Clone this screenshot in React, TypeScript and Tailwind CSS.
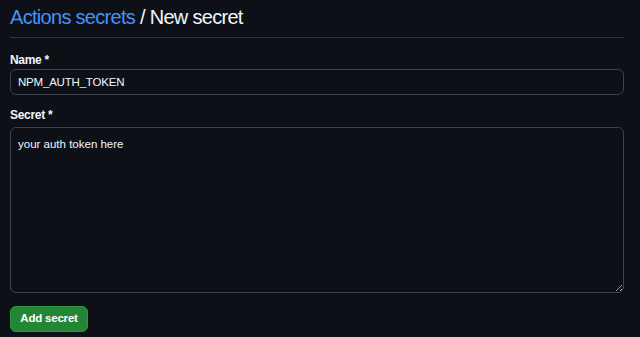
export default function App() {
  return (
    <div
      className="w-[640px] h-[337px] bg-[#0d1117] text-[#f0f6fc] px-[10px] pt-[5px] overflow-hidden"
      style={{ fontFamily: '"Liberation Sans", Arial, sans-serif' }}
    >
      <h1 className="text-[20px] leading-[24px] font-normal tracking-[-0.7px] pb-[8px] border-b border-[#30363d] w-[614px]">
        <a className="text-[#4493f8]">Actions secrets</a> / New secret
      </h1>

      <form className="w-[614px]">
        <label className="block text-[12px] font-bold leading-[16px] tracking-[-0.3px] mt-[14px] mb-[1px]">Name *</label>
        <input
          className="block w-full h-[26px] rounded-[6px] border border-[#3d444d] bg-[#0d1117] px-[7px] text-[11.5px] tracking-[-0.2px] text-[#f0f6fc] outline-none"
          defaultValue="NPM_AUTH_TOKEN"
          style={{ fontFamily: 'inherit' }}
        />

        <label className="block text-[12px] font-bold leading-[16px] tracking-[-0.3px] mt-[12px] mb-[4px]">Secret *</label>
        <textarea
          className="block w-full h-[166px] rounded-[6px] border border-[#3d444d] bg-[#0d1117] px-[7px] py-[8px] text-[11.5px] leading-[16px] text-[#f0f6fc] outline-none"
          defaultValue="your auth token here"
          style={{ fontFamily: 'inherit' }}
        />

        <button
          type="button"
          className="block mt-[13px] h-[26px] w-[78px] rounded-[6px] bg-[#238636] border border-[#2b9a40] text-white text-[11.5px] tracking-[-0.2px] font-bold text-center"
        >
          Add secret
        </button>
      </form>
    </div>
  )
}
